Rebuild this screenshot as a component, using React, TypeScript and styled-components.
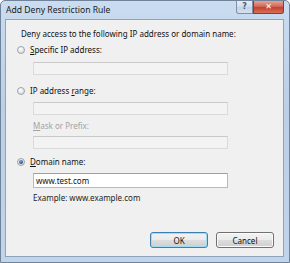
import React from 'react';
import styled, { createGlobalStyle } from 'styled-components';

const GlobalStyle = createGlobalStyle`
  html, body {
    margin: 0;
    padding: 0;
    background: #ffffff;
  }
  body {
    font-family: 'Noto Sans', 'Open Sans', sans-serif;
    font-size: 8px;
    color: #111;
  }
`;

const Window = styled.div`
  width: 290px;
  height: 263px;
  box-sizing: border-box;
  display: flex;
  flex-direction: column;
  border: 1px solid #71839b;
  border-radius: 5px 5px 0 0;
  background: linear-gradient(180deg, #cadcef 0%, #bccfe6 40%, #c0d4ea 100%);
  padding: 0 5px 5px 4px;
`;

const TitleBar = styled.div`
  height: 18px;
  display: flex;
  align-items: flex-start;
  justify-content: space-between;
`;

const Title = styled.div`
  padding: 3px 0 0 1px;
  font-size: 8.6px;
  color: #1a1a1a;
`;

const Caption = styled.div`
  display: flex;
`;

const CaptionButton = styled.div<{ $close?: boolean }>`
  width: ${(p) => (p.$close ? 31 : 17)}px;
  height: 13px;
  box-sizing: border-box;
  border: 1px solid ${(p) => (p.$close ? '#8a3a35' : '#7d8ea5')};
  border-top: none;
  border-radius: ${(p) => (p.$close ? '0 0 3px 0' : '0 0 0 3px')};
  background: ${(p) =>
    p.$close
      ? 'linear-gradient(180deg, #e6a293 0%, #d3695a 45%, #c4412f 55%, #d96f57 100%)'
      : 'linear-gradient(180deg, #e4edf7 0%, #d3e0ef 45%, #c3d3e7 55%, #d4e2f1 100%)'};
  display: flex;
  align-items: center;
  justify-content: center;
  color: ${(p) => (p.$close ? '#fff' : '#4b5a6e')};
  font-family: 'DejaVu Sans', sans-serif;
  font-weight: bold;
  font-size: 8px;
  line-height: 1;
`;

const Client = styled.div`
  flex: 1;
  background: #f0f0f0;
  border: 1px solid #8ea3bd;
  display: flex;
  flex-direction: column;
  padding: 8px 9px 8px 11px;
`;

const Intro = styled.div`
  height: 12px;
  line-height: 12px;
  padding-left: 4px;
`;

const RadioRow = styled.label<{ $top: number }>`
  display: flex;
  align-items: center;
  gap: 5px;
  height: 12px;
  margin-top: ${(p) => p.$top}px;
  line-height: 12px;
`;

const Radio = styled.span<{ $checked?: boolean }>`
  width: 8px;
  height: 8px;
  box-sizing: border-box;
  border-radius: 50%;
  border: 1px solid #9ba3ad;
  background: radial-gradient(circle at 40% 35%, #ffffff 0%, #e4e4e4 60%, #cfcfcf 100%);
  display: flex;
  align-items: center;
  justify-content: center;
  &::after {
    content: '';
    display: ${(p) => (p.$checked ? 'block' : 'none')};
    width: 4px;
    height: 4px;
    border-radius: 50%;
    background: radial-gradient(circle at 40% 35%, #7fa6d6 0%, #1c3f73 80%);
  }
`;

const Key = styled.span`
  text-decoration: underline;
  text-underline-offset: 1px;
`;

const Field = styled.div<{ $top: number; $active?: boolean }>`
  width: 195px;
  height: ${(p) => (p.$active ? 15 : 13)}px;
  box-sizing: border-box;
  margin: ${(p) => p.$top}px 0 0 16px;
  border: 1px solid ${(p) => (p.$active ? '#a9bdd5' : '#dadada')};
  border-top-color: ${(p) => (p.$active ? '#8aa3c4' : '#c9c9c9')};
  background: ${(p) => (p.$active ? '#ffffff' : '#f3f3f3')};
  padding-left: 2px;
  line-height: 13px;
`;

const SubLabel = styled.div<{ $top: number; $disabled?: boolean }>`
  margin: ${(p) => p.$top}px 0 0 16px;
  height: 12px;
  line-height: 12px;
  color: ${(p) => (p.$disabled ? '#a3a3a3' : '#1e1e1e')};
`;

const Footer = styled.div`
  margin-top: auto;
  display: flex;
  justify-content: flex-end;
  gap: 8px;
`;

const Button = styled.div<{ $default?: boolean }>`
  width: 58px;
  height: 16px;
  box-sizing: border-box;
  border-radius: 3px;
  border: 1px solid ${(p) => (p.$default ? '#3c7fb1' : '#707070')};
  box-shadow: inset 0 0 0 1px ${(p) => (p.$default ? '#9fdcf5' : '#fbfbfb')};
  background: linear-gradient(180deg, #f2f2f2 0%, #ebebeb 48%, #dddddd 52%, #cfcfcf 100%);
  display: flex;
  align-items: center;
  justify-content: center;
  font-size: 8px;
`;

export default function App() {
  return (
    <>
      <GlobalStyle />
      <Window>
        <TitleBar>
          <Title>Add Deny Restriction Rule</Title>
          <Caption>
            <CaptionButton>?</CaptionButton>
            <CaptionButton $close>✕</CaptionButton>
          </Caption>
        </TitleBar>
        <Client>
          <Intro>Deny access to the following IP address or domain name:</Intro>
          <RadioRow $top={4}>
            <Radio />
            <span>
              <Key>S</Key>pecific IP address:
            </span>
          </RadioRow>
          <Field $top={6} />
          <RadioRow $top={10}>
            <Radio />
            <span>
              IP address <Key>r</Key>ange:
            </span>
          </RadioRow>
          <Field $top={5} />
          <SubLabel $top={5} $disabled>
            <Key>M</Key>ask or Prefix:
          </SubLabel>
          <Field $top={4} />
          <RadioRow $top={7}>
            <Radio $checked />
            <span>
              <Key>D</Key>omain name:
            </span>
          </RadioRow>
          <Field $top={5} $active>
            www.test.com
          </Field>
          <SubLabel $top={4}>Example: www.example.com</SubLabel>
          <Footer>
            <Button $default>OK</Button>
            <Button>Cancel</Button>
          </Footer>
        </Client>
      </Window>
    </>
  );
}
